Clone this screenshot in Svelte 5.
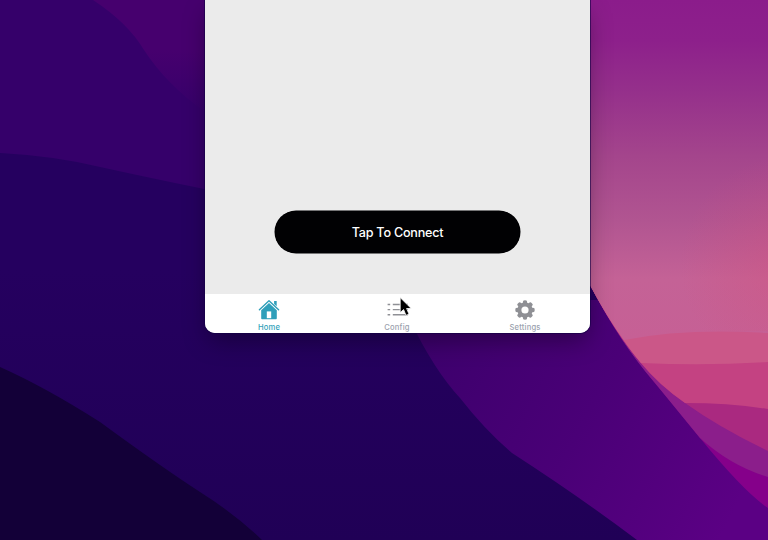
<script>
  const tabs = [
    { id: 'home', label: 'Home', active: true },
    { id: 'config', label: 'Config', active: false },
    { id: 'settings', label: 'Settings', active: false }
  ];
  const teeth = [0, 45, 90, 135, 180, 225, 270, 315];
</script>

<div class="desktop">
  <svg class="wallpaper" viewBox="0 0 768 540" aria-hidden="true">
    <defs>
      <linearGradient id="sky" x1="0" y1="0" x2="0" y2="1">
        <stop offset="0" stop-color="#8b1c8b" />
        <stop offset="0.12" stop-color="#8d208b" />
        <stop offset="0.27" stop-color="#95308b" />
        <stop offset="0.46" stop-color="#a4458c" />
        <stop offset="0.65" stop-color="#b15591" />
        <stop offset="0.82" stop-color="#c46296" />
        <stop offset="1" stop-color="#c66095" />
      </linearGradient>
      <linearGradient id="ridge" gradientUnits="userSpaceOnUse" x1="430" y1="340" x2="740" y2="500">
        <stop offset="0" stop-color="#3d006d" />
        <stop offset="0.5" stop-color="#4a0077" />
        <stop offset="1" stop-color="#5b0084" />
      </linearGradient>
      <linearGradient id="crest" gradientUnits="userSpaceOnUse" x1="0" y1="50" x2="0" y2="115">
        <stop offset="0" stop-color="#46006e" />
        <stop offset="1" stop-color="#35006a" />
      </linearGradient>
      <linearGradient id="base" x1="0" y1="0" x2="0" y2="1">
        <stop offset="0.5" stop-color="#25005f" />
        <stop offset="1" stop-color="#200056" />
      </linearGradient>
      <radialGradient id="glow" cx="790" cy="265" r="110" gradientUnits="userSpaceOnUse">
        <stop offset="0" stop-color="#d65078" stop-opacity="0.4" />
        <stop offset="1" stop-color="#d65078" stop-opacity="0" />
      </radialGradient>
    </defs>
    <rect width="768" height="540" fill="url(#base)" />
    <path d="M0 0H300V205L204 189Q150 178 100 167Q55 156 0 153Z" fill="#35006a" />
    <path d="M93 0Q128 23 144 50Q166 84 205 112V0Z" fill="url(#crest)" />
    <path d="M0 367Q45 387 100 422Q160 466 200 492Q235 514 262 540H0Z" fill="#130038" />
    <path d="M410 320Q434 370 460 398Q485 430 512 453Q580 497 637 540H768V300H590Z" fill="url(#ridge)" />
    <path d="M580 0H768V508Q744 492 700 438L665 395Q620 343 590 285Z" fill="#85008a" />
    <path d="M580 0H768V477Q731 466 700 438L655 383Q620 343 590 285Z" fill="#8b1e8b" />
    <path d="M580 0H768V451Q720 428 685 403Q659 385 640 362Q617 335 590 285Z" fill="#aa2980" />
    <path d="M580 0H768V409Q730 403 685 403Q659 385 640 362Q617 335 590 285Z" fill="#c44282" />
    <path d="M580 0H768V362Q705 366 641 363Q615 332 590 285Z" fill="#cb5788" />
    <path d="M580 0H768V333Q685 328 624 340Q607 317 590 285Z" fill="url(#sky)" />
    <rect x="680" y="155" width="88" height="176" fill="url(#glow)" />
  </svg>

  <main class="window">
    <section class="screen">
      <button class="connect">Tap To Connect</button>
    </section>
    <nav class="tabs">
      {#each tabs as tab (tab.id)}
        <a class="tab" class:active={tab.active} href="#{tab.id}">
          <svg class="icon" viewBox="0 0 22 22" aria-hidden="true">
            {#if tab.id === 'home'}
              <path d="M16.1 1.9h2.6v5.4l-2.6-2.4z" fill="currentColor" />
              <path d="M1.4 10.8 11 1.8l9.6 9" fill="none" stroke="currentColor" stroke-width="1.4" stroke-linejoin="round" stroke-linecap="round" />
              <path d="M11 4 18.8 11.3V19.2Q18.8 20.2 18 20.2H4Q3.2 20.2 3.2 19.2V11.3Z" fill="currentColor" />
              <path d="M8.8 12.4H13.2V19.2H8.8Z" fill="#fff" />
            {:else if tab.id === 'config'}
              <path d="M1.6 5.5h2.6M1.6 10.6h2.6M1.6 15.7h2.6M6.8 5.5h15.2M6.8 10.6h15.2M6.8 15.7h15.2" stroke="currentColor" stroke-width="1.4" fill="none" />
            {:else}
              {#each teeth as angle}
                <path d="M8.6 5 9.1 2Q9.3 1.3 11 1.3T12.9 2L13.4 5z" fill="currentColor" transform="rotate({angle} 11 11)" />
              {/each}
              <circle cx="11" cy="11" r="5.6" fill="none" stroke="currentColor" stroke-width="4" />
            {/if}
          </svg>
          <span>{tab.label}</span>
        </a>
      {/each}
    </nav>
  </main>

  <svg class="pointer" viewBox="0 0 13 20" aria-hidden="true">
    <path d="M1.2 .6V15.6L4.6 12.5L7 18.4L10 17.1L7.6 11.5H12.2Z" fill="#000" stroke="#fff" stroke-width=".8" />
  </svg>
</div>

<style>
  :global(body) {
    margin: 0;
    overflow: hidden;
  }
  .desktop {
    position: relative;
    width: 768px;
    height: 540px;
    overflow: hidden;
    font-family: Inter, 'Liberation Sans', sans-serif;
  }
  .wallpaper {
    position: absolute;
    inset: 0;
    width: 768px;
    height: 540px;
  }
  .window {
    position: relative;
    display: flex;
    flex-direction: column;
    width: 385px;
    height: 333px;
    margin-left: 205px;
    border-radius: 0 0 10px 10px;
    background: #ebebeb;
    box-shadow: 0 0 0 1px rgba(20, 0, 70, 0.6), 0 10px 24px -3px rgba(0, 0, 0, 0.36);
    clip-path: inset(0 -60px -60px -60px);
  }
  .screen {
    flex: 1;
    display: flex;
    align-items: flex-end;
    justify-content: center;
    padding-bottom: 41px;
  }
  .connect {
    width: 245px;
    height: 42px;
    padding: 0;
    border: 0;
    border-radius: 21px;
    background: #010103;
    box-shadow: 0 0 0 0.5px #010103;
    color: #fff;
    font: 500 12.6px/41px Inter, 'Liberation Sans', sans-serif;
    letter-spacing: -0.22px;
    text-align: center;
  }
  .tabs {
    display: flex;
    height: 39px;
    padding-right: 1px;
    background: #fff;
    border-radius: 0 0 10px 10px;
  }
  .tab {
    flex: 1;
    display: flex;
    flex-direction: column;
    align-items: center;
    padding-top: 5px;
    color: #8f9095;
    text-decoration: none;
  }
  .tab span {
    margin-top: 1.5px;
    font-size: 7.6px;
    line-height: 10px;
    font-weight: 500;
    letter-spacing: 0.2px;
    color: #9ba1ae;
  }
  .tab.active,
  .tab.active span {
    color: #2f9fba;
  }
  .icon {
    width: 22px;
    height: 22px;
  }
  .pointer {
    position: absolute;
    left: 399px;
    top: 297px;
    width: 13px;
    height: 20px;
  }
</style>
